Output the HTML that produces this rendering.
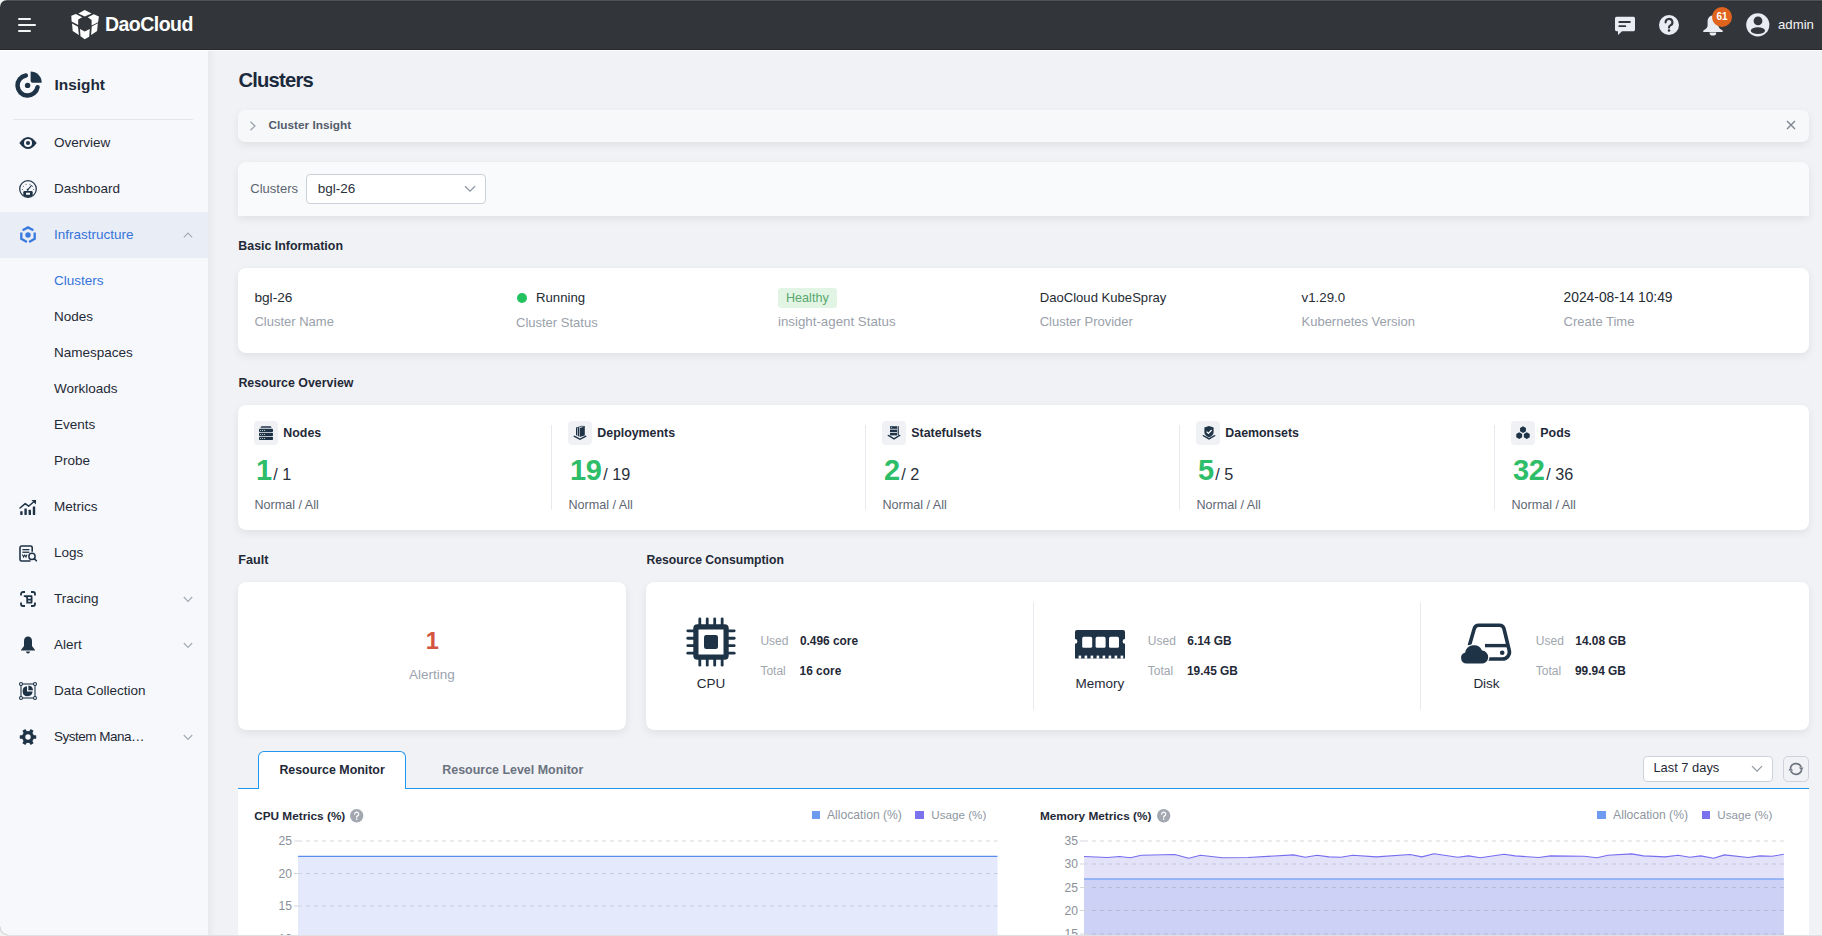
<!DOCTYPE html>
<html><head><meta charset="utf-8"><style>
*{box-sizing:border-box;margin:0;padding:0}
html,body{width:1822px;height:936px;overflow:hidden;background:#fff}
body{font-family:"Liberation Sans",sans-serif;position:relative}
.t{position:absolute;white-space:nowrap;line-height:1}
.r{position:absolute}
.s{position:absolute;overflow:visible}
</style></head><body>
<div class="r" style="left:0px;top:0px;width:1822px;height:50px;background:#323539"></div>
<div class="r" style="left:0px;top:0px;width:1822px;height:1px;background:#505357"></div>
<div class="r" style="left:0px;top:1px;width:1822px;height:1px;background:#2d3034"></div>
<div class="r" style="left:0px;top:49px;width:1822px;height:1px;background:#27292d"></div>
<div class="r" style="left:0px;top:50px;width:1822px;height:1px;background:#fcfcfd"></div>
<svg class="s" style="left:0px;top:0px;" width="8" height="8" viewBox="0 0 8 8"><path d="M0 0H7A7 7 0 0 0 0 7Z" fill="#f4f4f5"/></svg>
<div class="r" style="left:18px;top:18px;width:13px;height:2px;background:#f3f4f6;border-radius:1px"></div>
<div class="r" style="left:18px;top:24px;width:18px;height:2px;background:#f3f4f6;border-radius:1px"></div>
<div class="r" style="left:18px;top:30px;width:13px;height:2px;background:#f3f4f6;border-radius:1px"></div>
<svg class="s" style="left:68px;top:8px;" width="34" height="34" viewBox="0 0 34 34">
<path d="M10.35 5.45 L16.7 2 L23.6 5.45 L16.7 8.5Z" fill="#fff"/>
<path d="M3.3 7.8 L7.8 6 L14.2 9.3 L10.2 11.6 V17.1 L3.6 13.6Z" fill="#fff"/>
<path d="M19.8 9.3 L25.8 6.2 L30.9 8.5 L30.1 14.2 L23.6 17.4 V12Z" fill="#fff"/>
<path d="M4 15.6 L10 18.7 L10.9 27 L4.7 22.9Z" fill="#fff"/>
<path d="M12 21.1 L16.7 23.6 L21.8 20.9 L21.2 28.7 L16.7 31.2 L12.5 28.3Z" fill="#fff"/>
<path d="M23.8 18.5 L29.8 15.3 L29.1 23.1 L23.1 26.9Z" fill="#fff"/>
</svg>
<div class="t" style="left:105px;top:13.42px;font-size:21px;font-weight:bold;color:#ffffff;letter-spacing:-0.6px;transform:scaleX(0.93);transform-origin:0 0">DaoCloud</div>
<svg class="s" style="left:1614px;top:16px;" width="22" height="20" viewBox="0 0 22 20"><path d="M2.5 0.8 H19.5 A1.6 1.6 0 0 1 21 2.4 V13.6 A1.6 1.6 0 0 1 19.5 15.2 H8 L4 19 V15.2 H2.5 A1.6 1.6 0 0 1 1 13.6 V2.4 A1.6 1.6 0 0 1 2.5 0.8Z" fill="#e9edf3"/><rect x="4.4" y="5" width="12.4" height="1.9" rx="0.9" fill="#323539"/><rect x="4.4" y="9.2" width="7.8" height="1.9" rx="0.9" fill="#323539"/></svg>
<svg class="s" style="left:1658px;top:14px;" width="22" height="22" viewBox="0 0 22 22"><circle cx="11" cy="11" r="10" fill="#e9edf3"/><path d="M7.6 8.4 A3.4 3.4 0 1 1 12.4 11.4 C11.4 12 11 12.5 11 13.6" stroke="#323539" stroke-width="2.1" fill="none" stroke-linecap="round"/><circle cx="11" cy="16.6" r="1.25" fill="#323539"/></svg>
<svg class="s" style="left:1702px;top:14px;" width="22" height="22" viewBox="0 0 22 22"><path d="M11 1.4 C7.6 1.4 5.6 4 5.6 7.6 V11.4 C5.6 13.6 3.4 15.4 1.4 16.4 C1 16.8 1.2 18 1.8 18 H20.2 C20.8 18 21 16.8 20.6 16.4 C18.6 15.4 16.4 13.6 16.4 11.4 V7.6 C16.4 4 14.4 1.4 11 1.4Z" fill="#e9edf3"/><path d="M7.6 18.4 H14.2 V19.2 A3.3 2.4 0 0 1 7.6 19.2Z" fill="#e9edf3"/></svg>
<div class="r" style="left:1712px;top:7px;width:20px;height:20px;background:#e0641d;border-radius:50%"></div>
<div class="t" style="left:1522px;width:400px;text-align:center;top:11.84px;font-size:10px;font-weight:bold;color:#ffffff;">61</div>
<svg class="s" style="left:1746px;top:12.5px;" width="24" height="24" viewBox="0 0 24 24"><circle cx="11.8" cy="11.85" r="11.6" fill="#e9edf3"/><circle cx="12" cy="7.9" r="4.4" fill="#323539"/><circle cx="12" cy="7.9" r="3.1" fill="#323539"/><ellipse cx="11.9" cy="17.7" rx="7.1" ry="3.4" fill="#323539"/></svg>
<div class="t" style="left:1778px;top:17.83px;font-size:13.2px;color:#f3f4f6;">admin</div>
<div class="r" style="left:0px;top:51px;width:208px;height:885px;background:#f7f8fb"></div>
<svg class="s" style="left:12px;top:68px;" width="34" height="34" viewBox="0 0 34 34"><path d="M13.85 7.45 A10.1 10.1 0 1 0 25.55 19.15" fill="none" stroke="#1f3347" stroke-width="4.5" stroke-linecap="round"/><path d="M18.6 3.6 A11.1 11.1 0 0 1 29.7 14.7 H20.6 A2 2 0 0 1 18.6 12.7 Z" fill="#1f3347"/><circle cx="15.6" cy="17.4" r="2.7" fill="#1f3347"/></svg>
<div class="t" style="left:54.5px;top:76.86px;font-size:15.4px;font-weight:bold;color:#1d2b3a;">Insight</div>
<div class="r" style="left:13px;top:119px;width:180px;height:1px;background:#e3e6eb"></div>
<div class="r" style="left:0px;top:212px;width:208px;height:46px;background:#e9edf5"></div>
<div class="t" style="left:54px;top:136.27px;font-size:13.5px;color:#1f2a37;">Overview</div>
<div class="t" style="left:54px;top:182.37px;font-size:13.5px;color:#1f2a37;">Dashboard</div>
<div class="t" style="left:54px;top:228.37px;font-size:13.5px;color:#3574dc;">Infrastructure</div>
<div class="t" style="left:54px;top:500.37px;font-size:13.5px;color:#1f2a37;">Metrics</div>
<div class="t" style="left:54px;top:546.37px;font-size:13.5px;color:#1f2a37;">Logs</div>
<div class="t" style="left:54px;top:592.37px;font-size:13.5px;color:#1f2a37;">Tracing</div>
<div class="t" style="left:54px;top:638.37px;font-size:13.5px;color:#1f2a37;">Alert</div>
<div class="t" style="left:54px;top:684.37px;font-size:13.5px;color:#1f2a37;">Data Collection</div>
<div class="t" style="left:54px;top:730.37px;font-size:13.5px;color:#1f2a37;letter-spacing:-0.5px">System Mana…</div>
<div class="t" style="left:54px;top:274.37px;font-size:13.5px;color:#3574dc;">Clusters</div>
<div class="t" style="left:54px;top:310.37px;font-size:13.5px;color:#1f2a37;">Nodes</div>
<div class="t" style="left:54px;top:346.37px;font-size:13.5px;color:#1f2a37;">Namespaces</div>
<div class="t" style="left:54px;top:382.37px;font-size:13.5px;color:#1f2a37;">Workloads</div>
<div class="t" style="left:54px;top:418.37px;font-size:13.5px;color:#1f2a37;">Events</div>
<div class="t" style="left:54px;top:454.37px;font-size:13.5px;color:#1f2a37;">Probe</div>
<svg class="s" style="left:183px;top:232px;" width="10" height="6.4" viewBox="0 0 10 6.4"><path d="M0.8 5.4 L5 1 L9.2 5.4" fill="none" stroke="#a3abb6" stroke-width="1.2"/></svg>
<svg class="s" style="left:183px;top:596px;" width="10" height="6.4" viewBox="0 0 10 6.4"><path d="M0.8 1 L5 5.4 L9.2 1" fill="none" stroke="#a3abb6" stroke-width="1.2"/></svg>
<svg class="s" style="left:183px;top:642px;" width="10" height="6.4" viewBox="0 0 10 6.4"><path d="M0.8 1 L5 5.4 L9.2 1" fill="none" stroke="#a3abb6" stroke-width="1.2"/></svg>
<svg class="s" style="left:183px;top:734px;" width="10" height="6.4" viewBox="0 0 10 6.4"><path d="M0.8 1 L5 5.4 L9.2 1" fill="none" stroke="#a3abb6" stroke-width="1.2"/></svg>
<svg class="s" style="left:19px;top:134px;" width="18" height="18" viewBox="0 0 18 18"><path d="M0.3 9 Q9 -3.2 17.7 9 Q9 21.2 0.3 9Z" fill="#1f3347"/><circle cx="9" cy="9" r="4" fill="#f7f8fb"/><circle cx="9" cy="9" r="2.1" fill="#1f3347"/></svg>
<svg class="s" style="left:19px;top:180px;" width="18" height="18" viewBox="0 0 18 18"><circle cx="9" cy="9" r="8.3" fill="none" stroke="#1f3347" stroke-width="1.25"/><circle cx="3.30" cy="9.60" r="0.5" fill="#1f3347"/><circle cx="4.33" cy="6.33" r="0.5" fill="#1f3347"/><circle cx="7.05" cy="4.24" r="0.5" fill="#1f3347"/><circle cx="10.95" cy="4.24" r="0.5" fill="#1f3347"/><circle cx="13.67" cy="6.33" r="0.5" fill="#1f3347"/><circle cx="14.70" cy="9.60" r="0.5" fill="#1f3347"/><path d="M8.6 9.8 L12.4 5.6" stroke="#1f3347" stroke-width="1.1" stroke-linecap="round"/><circle cx="8.6" cy="9.7" r="1" fill="#1f3347"/><path d="M4.3 15.4 V12.2 Q4.3 11.1 5.4 11.1 H12.6 Q13.7 11.1 13.7 12.2 V15.4 A8.3 8.3 0 0 1 4.3 15.4Z" fill="#1f3347"/><rect x="7" y="12.7" width="4" height="2.1" fill="#f7f8fb"/></svg>
<svg class="s" style="left:20px;top:226px;" width="16" height="18" viewBox="0 0 16 18"><g fill="none" stroke="#3a7ade" stroke-width="2.3" stroke-linejoin="miter"><path d="M2.6 4.2 L8 1.4 L13.4 4.2"/><path d="M1.3 6.6 V12.8 L6.9 16"/><path d="M14.7 6.6 V12.8 L9.1 16"/></g><circle cx="8" cy="9" r="2.7" fill="#3a7ade"/></svg>
<svg class="s" style="left:19px;top:499px;" width="18" height="17" viewBox="0 0 18 17"><g fill="#1f3347"><rect x="1.2" y="12.2" width="2.4" height="3.8" rx="0.4"/><rect x="5.4" y="9.4" width="2.4" height="6.6" rx="0.4"/><rect x="9.6" y="10.8" width="2.4" height="5.2" rx="0.4"/><rect x="13.8" y="7.4" width="2.4" height="8.6" rx="0.4"/></g><path d="M1 9 L6.2 4.6 L9.6 7.2 L15.4 2.2" fill="none" stroke="#1f3347" stroke-width="1.5" stroke-linecap="round" stroke-linejoin="round"/><path d="M12.4 1 H17 V5.6 Z" fill="#1f3347"/></svg>
<svg class="s" style="left:19px;top:545px;" width="18" height="17" viewBox="0 0 18 17"><path d="M11.6 16 H2.6 A1.6 1.6 0 0 1 1 14.4 V2.6 A1.6 1.6 0 0 1 2.6 1 H11.6 A1.6 1.6 0 0 1 13.2 2.6 V6.8" fill="none" stroke="#1f3347" stroke-width="1.6"/><rect x="3.4" y="4" width="7" height="1.3" fill="#1f3347"/><rect x="3.4" y="6.6" width="7" height="1.3" fill="#1f3347"/><path d="M3.4 9.6 L4.6 12 L5.8 10 L7 12 L8 9.6" fill="none" stroke="#1f3347" stroke-width="1.1"/><circle cx="13" cy="11.4" r="3.1" fill="#f7f8fb" stroke="#1f3347" stroke-width="1.5"/><path d="M15.2 13.6 L17.4 15.8" stroke="#1f3347" stroke-width="1.6" stroke-linecap="round"/></svg>
<svg class="s" style="left:20px;top:591px;" width="16" height="16" viewBox="0 0 16 16"><g fill="none" stroke="#1f3347" stroke-width="1.8"><path d="M1 4.6 V3 A2 2 0 0 1 3 1 H5"/><path d="M11 1 H13 A2 2 0 0 1 15 3 V4.6"/><path d="M1 11.4 V13 A2 2 0 0 0 3 15 H5"/><path d="M11 15 H13 A2 2 0 0 0 15 13 V11.4"/><path d="M3.8 5.2 H12.2 M6 5.2 L7.2 6.8 V11.6 H12.2 M7.2 8.6 H12.2 M11.6 5.2 V11.6"/></g></svg>
<svg class="s" style="left:20px;top:636px;" width="16" height="18" viewBox="0 0 16 18"><path d="M8 0.6 C5.6 0.6 4 2.4 4 5 V10 L1 14 V14.6 H15 V14 L12 10 V5 C12 2.4 10.4 0.6 8 0.6Z" fill="#1f3347"/><path d="M6 15.6 H10 A2 2 0 0 1 6 15.6Z" fill="#1f3347"/></svg>
<svg class="s" style="left:19px;top:682px;" width="18" height="18" viewBox="0 0 18 18"><g fill="none" stroke="#1f3347" stroke-width="1.1"><rect x="2" y="2" width="14" height="14"/></g><circle cx="2" cy="2" r="1.5" fill="#f7f8fb" stroke="#1f3347" stroke-width="1.1"/><circle cx="16" cy="2" r="1.5" fill="#f7f8fb" stroke="#1f3347" stroke-width="1.1"/><circle cx="2" cy="16" r="1.5" fill="#f7f8fb" stroke="#1f3347" stroke-width="1.1"/><circle cx="16" cy="16" r="1.5" fill="#f7f8fb" stroke="#1f3347" stroke-width="1.1"/><path d="M8 4.2 A5 5 0 1 0 13.6 9.6 H8 Z" fill="#1f3347"/><path d="M9.4 3.6 A5 5 0 0 1 14 8.2 H9.4Z" fill="#1f3347"/></svg>
<svg class="s" style="left:20px;top:729.4px;" width="16" height="16" viewBox="0 0 16 16"><circle cx="8" cy="8" r="6" fill="#1f3347"/><rect x="6.2" y="-0.2" width="3.6" height="4" rx="0.6" fill="#1f3347" transform="rotate(30 8 8)"/><rect x="6.2" y="-0.2" width="3.6" height="4" rx="0.6" fill="#1f3347" transform="rotate(90 8 8)"/><rect x="6.2" y="-0.2" width="3.6" height="4" rx="0.6" fill="#1f3347" transform="rotate(150 8 8)"/><rect x="6.2" y="-0.2" width="3.6" height="4" rx="0.6" fill="#1f3347" transform="rotate(210 8 8)"/><rect x="6.2" y="-0.2" width="3.6" height="4" rx="0.6" fill="#1f3347" transform="rotate(270 8 8)"/><rect x="6.2" y="-0.2" width="3.6" height="4" rx="0.6" fill="#1f3347" transform="rotate(330 8 8)"/><circle cx="8" cy="8" r="2.7" fill="#f7f8fb"/></svg>
<div class="r" style="left:208px;top:51px;width:1614px;height:885px;background:#f1f2f5"></div>
<div class="r" style="left:208px;top:51px;width:8px;height:885px;background:linear-gradient(90deg,rgba(0,0,0,0.04),rgba(0,0,0,0))"></div>
<div class="t" style="left:238.5px;top:70.10px;font-size:20.2px;font-weight:bold;color:#1b2a3c;letter-spacing:-0.8px">Clusters</div>
<div class="r" style="left:238px;top:110px;width:1571px;height:32px;background:#f7f8fa;border-radius:7px;box-shadow:0 3px 8px rgba(0,0,0,0.075)"></div>
<svg class="s" style="left:249px;top:121px;" width="8" height="10" viewBox="0 0 8 10"><path d="M1.5 0.8 L6 5 L1.5 9.2" fill="none" stroke="#98a1ac" stroke-width="1.2"/></svg>
<div class="t" style="left:268.5px;top:119.81px;font-size:11.8px;font-weight:bold;color:#545c69;">Cluster Insight</div>
<svg class="s" style="left:1786px;top:120px;" width="10" height="10" viewBox="0 0 10 10"><path d="M1 1 L9 9 M9 1 L1 9" stroke="#7b8490" stroke-width="1.4"/></svg>
<div class="r" style="left:238px;top:162px;width:1571px;height:54px;background:#f9fafb;border-radius:8px 8px 0 0;box-shadow:0 3px 8px rgba(0,0,0,0.075)"></div>
<div class="t" style="left:250.3px;top:182.40px;font-size:13px;color:#5c6470;">Clusters</div>
<div class="r" style="left:306px;top:174px;width:180px;height:30px;background:#fff;border:1px solid #cbd0d8;border-radius:4px"></div>
<div class="t" style="left:317.7px;top:181.97px;font-size:13.5px;color:#2a313b;">bgl-26</div>
<svg class="s" style="left:464px;top:185px;" width="12" height="8" viewBox="0 0 12 8"><path d="M1 1.2 L6 6.2 L11 1.2" fill="none" stroke="#8e97a3" stroke-width="1.3"/></svg>
<div class="t" style="left:238.3px;top:239.80px;font-size:12.4px;font-weight:bold;color:#1f2937;">Basic Information</div>
<div class="r" style="left:238px;top:268px;width:1571px;height:85px;background:#fff;border-radius:8px;box-shadow:0 3px 8px rgba(0,0,0,0.075)"></div>
<div class="t" style="left:254.4px;top:290.80px;font-size:13.7px;color:#252b33;">bgl-26</div>
<div class="t" style="left:254.4px;top:315.40px;font-size:13px;color:#9aa1ab;">Cluster Name</div>
<div class="r" style="left:517px;top:293px;width:10px;height:10px;background:#22c25f;border-radius:50%"></div>
<div class="t" style="left:536px;top:291.23px;font-size:13.2px;color:#252b33;">Running</div>
<div class="t" style="left:516px;top:316.00px;font-size:13px;color:#9aa1ab;">Cluster Status</div>
<div class="r" style="left:778px;top:288px;width:59px;height:20px;background:#e2f5e5;border-radius:3px"></div>
<div class="t" style="left:786px;top:292.03px;font-size:12.6px;color:#58a86b;">Healthy</div>
<div class="t" style="left:778px;top:315.14px;font-size:13.3px;color:#9aa1ab;">insight-agent Status</div>
<div class="t" style="left:1039.7px;top:291.31px;font-size:13.1px;color:#252b33;">DaoCloud KubeSpray</div>
<div class="t" style="left:1039.7px;top:315.00px;font-size:13px;color:#9aa1ab;">Cluster Provider</div>
<div class="t" style="left:1301.5px;top:291.14px;font-size:13.3px;color:#252b33;">v1.29.0</div>
<div class="t" style="left:1301.5px;top:315.00px;font-size:13px;color:#9aa1ab;">Kubernetes Version</div>
<div class="t" style="left:1563.6px;top:290.72px;font-size:13.8px;color:#252b33;">2024-08-14 10:49</div>
<div class="t" style="left:1563.6px;top:315.00px;font-size:13px;color:#9aa1ab;">Create Time</div>
<div class="t" style="left:238.4px;top:376.70px;font-size:12.4px;font-weight:bold;color:#1f2937;">Resource Overview</div>
<div class="r" style="left:238px;top:405px;width:1571px;height:125px;background:#fff;border-radius:8px;box-shadow:0 3px 8px rgba(0,0,0,0.075)"></div>
<div class="r" style="left:254px;top:421px;width:24px;height:24px;background:#eff1f5;border-radius:4px"></div>
<div class="t" style="left:283.3px;top:427.10px;font-size:12.4px;font-weight:bold;color:#1f2937;">Nodes</div>
<div class="t" style="left:256px;top:455.65px;font-size:29px;font-weight:bold;color:#2ebd68;letter-spacing:-0.3px">1</div>
<div class="t" style="left:273.325px;top:466.49px;font-size:16.2px;color:#2a313b;">/ 1</div>
<div class="t" style="left:254.4px;top:499.13px;font-size:12.6px;color:#5f6773;">Normal / All</div>
<div class="r" style="left:551px;top:425px;width:1px;height:85px;background:#e6e9ee"></div>
<div class="r" style="left:568px;top:421px;width:24px;height:24px;background:#eff1f5;border-radius:4px"></div>
<div class="t" style="left:597.3px;top:427.10px;font-size:12.4px;font-weight:bold;color:#1f2937;">Deployments</div>
<div class="t" style="left:570px;top:455.65px;font-size:29px;font-weight:bold;color:#2ebd68;letter-spacing:-0.3px">19</div>
<div class="t" style="left:603.15px;top:466.49px;font-size:16.2px;color:#2a313b;">/ 19</div>
<div class="t" style="left:568.4px;top:499.13px;font-size:12.6px;color:#5f6773;">Normal / All</div>
<div class="r" style="left:865px;top:425px;width:1px;height:85px;background:#e6e9ee"></div>
<div class="r" style="left:882px;top:421px;width:24px;height:24px;background:#eff1f5;border-radius:4px"></div>
<div class="t" style="left:911.3px;top:427.10px;font-size:12.4px;font-weight:bold;color:#1f2937;">Statefulsets</div>
<div class="t" style="left:884px;top:455.65px;font-size:29px;font-weight:bold;color:#2ebd68;letter-spacing:-0.3px">2</div>
<div class="t" style="left:901.325px;top:466.49px;font-size:16.2px;color:#2a313b;">/ 2</div>
<div class="t" style="left:882.4px;top:499.13px;font-size:12.6px;color:#5f6773;">Normal / All</div>
<div class="r" style="left:1179px;top:425px;width:1px;height:85px;background:#e6e9ee"></div>
<div class="r" style="left:1196px;top:421px;width:24px;height:24px;background:#eff1f5;border-radius:4px"></div>
<div class="t" style="left:1225.3px;top:427.10px;font-size:12.4px;font-weight:bold;color:#1f2937;">Daemonsets</div>
<div class="t" style="left:1198px;top:455.65px;font-size:29px;font-weight:bold;color:#2ebd68;letter-spacing:-0.3px">5</div>
<div class="t" style="left:1215.325px;top:466.49px;font-size:16.2px;color:#2a313b;">/ 5</div>
<div class="t" style="left:1196.4px;top:499.13px;font-size:12.6px;color:#5f6773;">Normal / All</div>
<div class="r" style="left:1494px;top:425px;width:1px;height:85px;background:#e6e9ee"></div>
<div class="r" style="left:1511px;top:421px;width:24px;height:24px;background:#eff1f5;border-radius:4px"></div>
<div class="t" style="left:1540.3px;top:427.10px;font-size:12.4px;font-weight:bold;color:#1f2937;">Pods</div>
<div class="t" style="left:1513px;top:455.65px;font-size:29px;font-weight:bold;color:#2ebd68;letter-spacing:-0.3px">32</div>
<div class="t" style="left:1546.15px;top:466.49px;font-size:16.2px;color:#2a313b;">/ 36</div>
<div class="t" style="left:1511.4px;top:499.13px;font-size:12.6px;color:#5f6773;">Normal / All</div>
<svg class="s" style="left:258px;top:425px;" width="16" height="16" viewBox="0 0 16 16"><path d="M3.4 1.2 H12.6 L13.6 2.8 H2.4Z" fill="#1f3347"/><rect x="1" y="3.8" width="14" height="3.3" rx="0.8" fill="#1f3347"/><circle cx="2.6" cy="5.45" r="0.55" fill="#d8f5d8"/><circle cx="4.6" cy="5.45" r="0.55" fill="#d8f5d8"/><circle cx="6.6" cy="5.45" r="0.55" fill="#d8f5d8"/><rect x="1" y="7.8" width="14" height="3.3" rx="0.8" fill="#1f3347"/><circle cx="2.6" cy="9.45" r="0.55" fill="#d8f5d8"/><circle cx="4.6" cy="9.45" r="0.55" fill="#d8f5d8"/><circle cx="6.6" cy="9.45" r="0.55" fill="#d8f5d8"/><rect x="1" y="11.8" width="14" height="3.3" rx="0.8" fill="#1f3347"/><circle cx="2.6" cy="13.45" r="0.55" fill="#d8f5d8"/><circle cx="4.6" cy="13.45" r="0.55" fill="#d8f5d8"/><circle cx="6.6" cy="13.45" r="0.55" fill="#d8f5d8"/></svg>
<svg class="s" style="left:572px;top:425px;" width="16" height="16" viewBox="0 0 16 16"><path d="M1.2 11.4 L8 15 L14.8 11.4 L13.6 10.6 L8 13.4 L2.4 10.6Z" fill="#1f3347"/><path d="M7.6 3 L12.8 1.6 V10.6 L7.6 12 Z" fill="#1f3347"/><path d="M5.8 2.6 L7 2.2 V11.4 L5.8 11 Z M4 3 L5.2 2.6 V10.6 L4 10.2Z" fill="#1f3347"/><path d="M4 3 L9.6 1.2 L12.8 1.6" fill="none" stroke="#1f3347" stroke-width="0.8"/></svg>
<svg class="s" style="left:886px;top:425px;" width="16" height="16" viewBox="0 0 16 16"><path d="M1.2 10.6 L8 14.8 L14.8 10.6 L13.4 9.8 L8 13 L2.6 9.8Z" fill="#1f3347"/><rect x="4" y="1.2" width="7" height="2.6" fill="#1f3347"/><rect x="4" y="4.6" width="7" height="2.4" fill="#1f3347"/><rect x="4" y="7.8" width="7" height="2.6" fill="#1f3347"/><rect x="11.6" y="1.2" width="1.2" height="9" fill="#1f3347"/><circle cx="5.4" cy="2.5" r="0.6" fill="#9fd4ff"/></svg>
<svg class="s" style="left:1201px;top:425px;" width="16" height="16" viewBox="0 0 16 16"><path d="M1.2 10.8 L8 14.8 L14.8 10.8 L13.4 10 L8 13 L2.6 10Z" fill="#1f3347"/><path d="M8 1 L12.6 2.6 V7 C12.6 9.8 10.6 11.4 8 12.2 C5.4 11.4 3.4 9.8 3.4 7 V2.6Z" fill="#1f3347"/><path d="M5.6 6.6 L7.4 8.4 L10.6 5" fill="none" stroke="#fff" stroke-width="1.2"/></svg>
<svg class="s" style="left:1515px;top:425px;" width="16" height="16" viewBox="0 0 16 16"><path d="M10.94 6.30 L8.00 8.00 L5.06 6.30 L5.06 2.90 L8.00 1.20 L10.94 2.90Z" fill="#1f3347"/><path d="M7.14 12.30 L4.20 14.00 L1.26 12.30 L1.26 8.90 L4.20 7.20 L7.14 8.90Z" fill="#1f3347"/><path d="M14.74 12.30 L11.80 14.00 L8.86 12.30 L8.86 8.90 L11.80 7.20 L14.74 8.90Z" fill="#1f3347"/></svg>
<div class="t" style="left:238.3px;top:553.93px;font-size:12.6px;font-weight:bold;color:#1f2937;">Fault</div>
<div class="t" style="left:646.4px;top:553.87px;font-size:12.2px;font-weight:bold;color:#1f2937;">Resource Consumption</div>
<div class="r" style="left:238px;top:582px;width:388px;height:148px;background:#fff;border-radius:8px;box-shadow:0 3px 8px rgba(0,0,0,0.075)"></div>
<div class="t" style="left:232.3px;width:400px;text-align:center;top:629.62px;font-size:23.6px;font-weight:bold;color:#d4553f;">1</div>
<div class="t" style="left:232px;width:400px;text-align:center;top:667.57px;font-size:13.5px;color:#9ca3af;">Alerting</div>
<div class="r" style="left:646px;top:582px;width:1163px;height:148px;background:#fff;border-radius:8px;box-shadow:0 3px 8px rgba(0,0,0,0.075)"></div>
<div class="r" style="left:1033px;top:602px;width:1px;height:108px;background:#e6e9ee"></div>
<div class="r" style="left:1420px;top:602px;width:1px;height:108px;background:#e6e9ee"></div>
<svg class="s" style="left:686px;top:617px;" width="50" height="50" viewBox="0 0 50 50"><rect x="7.3" y="7.3" width="35.4" height="35.4" rx="4" fill="#1f3347"/><rect x="12.5" y="12.5" width="25" height="25" fill="#fff"/><rect x="18" y="18" width="14" height="14" rx="2.2" fill="#1f3347"/><rect x="12.40" y="0.4" width="2.8" height="9" rx="1.4" fill="#1f3347"/><rect x="12.40" y="40.6" width="2.8" height="9" rx="1.4" fill="#1f3347"/><rect x="0.4" y="12.40" width="9" height="2.8" rx="1.4" fill="#1f3347"/><rect x="40.6" y="12.40" width="9" height="2.8" rx="1.4" fill="#1f3347"/><rect x="19.85" y="0.4" width="2.8" height="9" rx="1.4" fill="#1f3347"/><rect x="19.85" y="40.6" width="2.8" height="9" rx="1.4" fill="#1f3347"/><rect x="0.4" y="19.85" width="9" height="2.8" rx="1.4" fill="#1f3347"/><rect x="40.6" y="19.85" width="9" height="2.8" rx="1.4" fill="#1f3347"/><rect x="27.30" y="0.4" width="2.8" height="9" rx="1.4" fill="#1f3347"/><rect x="27.30" y="40.6" width="2.8" height="9" rx="1.4" fill="#1f3347"/><rect x="0.4" y="27.30" width="9" height="2.8" rx="1.4" fill="#1f3347"/><rect x="40.6" y="27.30" width="9" height="2.8" rx="1.4" fill="#1f3347"/><rect x="34.75" y="0.4" width="2.8" height="9" rx="1.4" fill="#1f3347"/><rect x="34.75" y="40.6" width="2.8" height="9" rx="1.4" fill="#1f3347"/><rect x="0.4" y="34.75" width="9" height="2.8" rx="1.4" fill="#1f3347"/><rect x="40.6" y="34.75" width="9" height="2.8" rx="1.4" fill="#1f3347"/></svg>
<div class="t" style="left:511px;width:400px;text-align:center;top:677.17px;font-size:13.5px;color:#1f2a37;">CPU</div>
<div class="t" style="left:760.4px;top:634.64px;font-size:12px;color:#a0a6ae;">Used</div>
<div class="t" style="left:799.9px;top:635.73px;font-size:11.9px;font-weight:bold;color:#1f2937;">0.496 core</div>
<div class="t" style="left:760.4px;top:664.64px;font-size:12px;color:#a0a6ae;">Total</div>
<div class="t" style="left:799.6px;top:665.73px;font-size:11.9px;font-weight:bold;color:#1f2937;">16 core</div>
<svg class="s" style="left:1075px;top:629.5px;" width="50" height="29" viewBox="0 0 50 29"><path d="M2 0 H48 A2 2 0 0 1 50 2 V9 A2.4 2.4 0 0 0 50 13.8 V28.5 H0 V13.8 A2.4 2.4 0 0 0 0 9 V2 A2 2 0 0 1 2 0Z" fill="#1f3347"/><rect x="7.2" y="6.8" width="10" height="11" rx="1.6" fill="#fff"/><rect x="20.6" y="6.8" width="10" height="11" rx="1.6" fill="#fff"/><rect x="34.0" y="6.8" width="10" height="11" rx="1.6" fill="#fff"/><rect x="3.60" y="25.6" width="2.6" height="3" fill="#fff"/><rect x="9.60" y="25.6" width="2.6" height="3" fill="#fff"/><rect x="15.60" y="25.6" width="2.6" height="3" fill="#fff"/><rect x="21.60" y="25.6" width="2.6" height="3" fill="#fff"/><rect x="27.60" y="25.6" width="2.6" height="3" fill="#fff"/><rect x="33.60" y="25.6" width="2.6" height="3" fill="#fff"/><rect x="39.60" y="25.6" width="2.6" height="3" fill="#fff"/><rect x="45.60" y="25.6" width="2.6" height="3" fill="#fff"/></svg>
<div class="t" style="left:900px;width:400px;text-align:center;top:677.37px;font-size:13.5px;color:#1f2a37;">Memory</div>
<div class="t" style="left:1147.8px;top:634.64px;font-size:12px;color:#a0a6ae;">Used</div>
<div class="t" style="left:1187.3px;top:635.73px;font-size:11.9px;font-weight:bold;color:#1f2937;">6.14 GB</div>
<div class="t" style="left:1147.8px;top:664.64px;font-size:12px;color:#a0a6ae;">Total</div>
<div class="t" style="left:1187.0px;top:665.73px;font-size:11.9px;font-weight:bold;color:#1f2937;">19.45 GB</div>
<svg class="s" style="left:1461px;top:622.5px;" width="51" height="42" viewBox="0 0 51 42"><path d="M8.4 22.4 L13.2 5.8 A4.8 4.8 0 0 1 17.8 2.2 H38.4 A4.8 4.8 0 0 1 43 5.8 L48.2 27.2 A7 7 0 0 1 41.4 36 H24" fill="none" stroke="#1f3347" stroke-width="3.6" stroke-linejoin="round"/><path d="M24 22.6 H47" stroke="#1f3347" stroke-width="3.4"/><circle cx="41.2" cy="29.8" r="2.3" fill="#1f3347"/><path d="M5.8 40.6 A5.6 5.6 0 0 1 4.2 29.6 A8.8 8.8 0 0 1 21 27.6 A6.5 6.5 0 0 1 20.4 40.6 Z" fill="#1f3347" stroke="#fff" stroke-width="2.6" paint-order="stroke"/></svg>
<div class="t" style="left:1286.5px;width:400px;text-align:center;top:677.37px;font-size:13.5px;color:#1f2a37;">Disk</div>
<div class="t" style="left:1535.8px;top:634.64px;font-size:12px;color:#a0a6ae;">Used</div>
<div class="t" style="left:1575.3px;top:635.73px;font-size:11.9px;font-weight:bold;color:#1f2937;">14.08 GB</div>
<div class="t" style="left:1535.8px;top:664.64px;font-size:12px;color:#a0a6ae;">Total</div>
<div class="t" style="left:1575.0px;top:665.73px;font-size:11.9px;font-weight:bold;color:#1f2937;">99.94 GB</div>
<div class="r" style="left:238px;top:788px;width:1571px;height:1px;background:#2196ee"></div>
<div class="r" style="left:258px;top:751px;width:148px;height:38px;background:#fff;border:1px solid #2196ee;border-bottom:none;border-radius:6px 6px 0 0"></div>
<div class="t" style="left:279.4px;top:764.20px;font-size:12.4px;font-weight:bold;color:#1f2937;">Resource Monitor</div>
<div class="t" style="left:442.3px;top:764.16px;font-size:12.45px;font-weight:bold;color:#6b7280;">Resource Level Monitor</div>
<div class="r" style="left:1643px;top:756px;width:130px;height:26px;background:#fff;border:1px solid #cdd2da;border-radius:4px"></div>
<div class="t" style="left:1653.4px;top:762.38px;font-size:12.9px;color:#1f2937;">Last 7 days</div>
<svg class="s" style="left:1751px;top:765px;" width="12" height="8" viewBox="0 0 12 8"><path d="M1 1.2 L6 6.2 L11 1.2" fill="none" stroke="#8e97a3" stroke-width="1.2"/></svg>
<div class="r" style="left:1783px;top:756px;width:26px;height:26px;border:1px solid #cdd2da;border-radius:5px"></div>
<svg class="s" style="left:1788px;top:761px;" width="16" height="16" viewBox="0 0 16 16"><g fill="none" stroke="#6f7680" stroke-width="1.7"><path d="M2.4 7 A5.7 5.7 0 0 1 13.2 6.2"/><path d="M13.6 9 A5.7 5.7 0 0 1 2.8 9.8"/></g><path d="M10.8 6.4 L15.6 6.4 L13.6 9.6Z" fill="#6f7680"/><path d="M5.2 9.6 L0.4 9.6 L2.4 6.4Z" fill="#6f7680"/></svg>
<div class="r" style="left:238px;top:789px;width:1571px;height:147px;background:#fff"></div>
<div class="t" style="left:254.2px;top:810.71px;font-size:11.8px;font-weight:bold;color:#1f2937;">CPU Metrics (%)</div>
<svg class="s" style="left:350.4px;top:809.0px;" width="13.4" height="13.4" viewBox="0 0 14 14"><circle cx="7" cy="7" r="7" fill="#a3a8b0"/><path d="M4.9 5.4 A2.1 2.1 0 1 1 7.9 7.2 C7.3 7.6 7 7.9 7 8.6" stroke="#fff" stroke-width="1.3" fill="none" stroke-linecap="round"/><circle cx="7" cy="10.6" r="0.8" fill="#fff"/></svg>
<div class="t" style="left:1039.9px;top:810.71px;font-size:11.8px;font-weight:bold;color:#1f2937;">Memory Metrics (%)</div>
<svg class="s" style="left:1157.2px;top:809.0px;" width="13.4" height="13.4" viewBox="0 0 14 14"><circle cx="7" cy="7" r="7" fill="#a3a8b0"/><path d="M4.9 5.4 A2.1 2.1 0 1 1 7.9 7.2 C7.3 7.6 7 7.9 7 8.6" stroke="#fff" stroke-width="1.3" fill="none" stroke-linecap="round"/><circle cx="7" cy="10.6" r="0.8" fill="#fff"/></svg>
<div class="r" style="left:811.5px;top:811.3px;width:8.3px;height:7.6px;background:#6e9bf0"></div>
<div class="t" style="left:827px;top:808.62px;font-size:12.15px;color:#8f969f;">Allocation (%)</div>
<div class="r" style="left:915.3px;top:811.3px;width:8.3px;height:7.6px;background:#7b73ee"></div>
<div class="t" style="left:931.3px;top:809.04px;font-size:11.65px;color:#8f969f;">Usage (%)</div>
<div class="r" style="left:1597.4px;top:811.3px;width:8.3px;height:7.6px;background:#6e9bf0"></div>
<div class="t" style="left:1613.1px;top:808.62px;font-size:12.15px;color:#8f969f;">Allocation (%)</div>
<div class="r" style="left:1701.6px;top:811.3px;width:8.3px;height:7.6px;background:#7b73ee"></div>
<div class="t" style="left:1717.3px;top:809.04px;font-size:11.65px;color:#8f969f;">Usage (%)</div>
<div class="t" style="left:252px;top:835.16px;font-size:12.1px;color:#8a9099;width:40px;text-align:right">25</div>
<div class="t" style="left:252px;top:867.66px;font-size:12.1px;color:#8a9099;width:40px;text-align:right">20</div>
<div class="t" style="left:252px;top:900.16px;font-size:12.1px;color:#8a9099;width:40px;text-align:right">15</div>
<div class="t" style="left:252px;top:932.66px;font-size:12.1px;color:#8a9099;width:40px;text-align:right">10</div>
<svg class="s" style="left:0;top:0" width="1822" height="936" viewBox="0 0 1822 936"><path d="M298 856.4 H997.5 V936 H298Z" fill="#e4eafb"/><path d="M298 856.4 H997.5" stroke="#5b8def" stroke-width="1.4" fill="none"/><path d="M294 841.0 H302" stroke="#d3d7dd" stroke-width="1"/><path d="M306 841.0 H997.5" stroke="rgba(150,160,172,0.42)" stroke-width="1.2" stroke-dasharray="4 4"/><path d="M294 873.5 H302" stroke="#d3d7dd" stroke-width="1"/><path d="M306 873.5 H997.5" stroke="rgba(150,160,172,0.42)" stroke-width="1.2" stroke-dasharray="4 4"/><path d="M294 906.0 H302" stroke="#d3d7dd" stroke-width="1"/><path d="M306 906.0 H997.5" stroke="rgba(150,160,172,0.42)" stroke-width="1.2" stroke-dasharray="4 4"/><path d="M294 938.5 H302" stroke="#d3d7dd" stroke-width="1"/><path d="M306 938.5 H997.5" stroke="rgba(150,160,172,0.42)" stroke-width="1.2" stroke-dasharray="4 4"/></svg>
<div class="t" style="left:1038px;top:835.16px;font-size:12.1px;color:#8a9099;width:40px;text-align:right">35</div>
<div class="t" style="left:1038px;top:858.16px;font-size:12.1px;color:#8a9099;width:40px;text-align:right">30</div>
<div class="t" style="left:1038px;top:881.66px;font-size:12.1px;color:#8a9099;width:40px;text-align:right">25</div>
<div class="t" style="left:1038px;top:904.66px;font-size:12.1px;color:#8a9099;width:40px;text-align:right">20</div>
<div class="t" style="left:1038px;top:928.16px;font-size:12.1px;color:#8a9099;width:40px;text-align:right">15</div>
<svg class="s" style="left:0;top:0" width="1822" height="936" viewBox="0 0 1822 936"><path d="M1084.0 856.5 L1107.7 857.5 L1119.5 856.5 L1130.4 857.8 L1141.3 855.3 L1174.9 854.5 L1188.7 858.2 L1200.6 855.3 L1222.3 857.8 L1248.0 857.5 L1293.4 854.9 L1305.3 857.3 L1317.2 855.3 L1329.0 856.9 L1340.9 857.3 L1352.7 855.3 L1376.4 856.9 L1410.0 854.5 L1421.9 856.9 L1434.0 853.7 L1457.7 857.3 L1468.5 855.9 L1480.4 857.8 L1504.1 854.3 L1515.0 855.9 L1538.7 857.5 L1550.6 855.9 L1584.2 856.3 L1597.0 857.8 L1607.9 855.3 L1631.6 853.9 L1643.4 855.9 L1665.2 856.9 L1678.0 855.3 L1689.9 857.3 L1700.7 855.9 L1713.6 858.2 L1724.5 854.9 L1748.2 857.5 L1760.0 855.9 L1771.9 856.3 L1783.8 854.3 V936 H1084Z" fill="#e3e2f9"/><path d="M1084 879 H1783.8 V936 H1084Z" fill="#cdd1f5"/><path d="M1084.0 856.5 L1107.7 857.5 L1119.5 856.5 L1130.4 857.8 L1141.3 855.3 L1174.9 854.5 L1188.7 858.2 L1200.6 855.3 L1222.3 857.8 L1248.0 857.5 L1293.4 854.9 L1305.3 857.3 L1317.2 855.3 L1329.0 856.9 L1340.9 857.3 L1352.7 855.3 L1376.4 856.9 L1410.0 854.5 L1421.9 856.9 L1434.0 853.7 L1457.7 857.3 L1468.5 855.9 L1480.4 857.8 L1504.1 854.3 L1515.0 855.9 L1538.7 857.5 L1550.6 855.9 L1584.2 856.3 L1597.0 857.8 L1607.9 855.3 L1631.6 853.9 L1643.4 855.9 L1665.2 856.9 L1678.0 855.3 L1689.9 857.3 L1700.7 855.9 L1713.6 858.2 L1724.5 854.9 L1748.2 857.5 L1760.0 855.9 L1771.9 856.3 L1783.8 854.3" stroke="#776cf0" stroke-width="1.1" fill="none" stroke-linejoin="round"/><path d="M1084 879 H1783.8" stroke="#80a7f3" stroke-width="1.7" fill="none"/><path d="M1080 841.0 H1088" stroke="#d3d7dd" stroke-width="1"/><path d="M1092 841.0 H1783.8" stroke="rgba(150,160,172,0.42)" stroke-width="1.2" stroke-dasharray="4 4"/><path d="M1080 864.0 H1088" stroke="#d3d7dd" stroke-width="1"/><path d="M1092 864.0 H1783.8" stroke="rgba(150,160,172,0.42)" stroke-width="1.2" stroke-dasharray="4 4"/><path d="M1080 887.5 H1088" stroke="#d3d7dd" stroke-width="1"/><path d="M1092 887.5 H1783.8" stroke="rgba(150,160,172,0.42)" stroke-width="1.2" stroke-dasharray="4 4"/><path d="M1080 910.5 H1088" stroke="#d3d7dd" stroke-width="1"/><path d="M1092 910.5 H1783.8" stroke="rgba(150,160,172,0.42)" stroke-width="1.2" stroke-dasharray="4 4"/><path d="M1080 934.0 H1088" stroke="#d3d7dd" stroke-width="1"/><path d="M1092 934.0 H1783.8" stroke="rgba(150,160,172,0.42)" stroke-width="1.2" stroke-dasharray="4 4"/></svg>
<div class="r" style="left:0px;top:935px;width:1822px;height:1px;background:#e0e0e1"></div>
<svg class="s" style="left:0px;top:926px;" width="10" height="10" viewBox="0 0 10 10"><path d="M0 0 A9 9 0 0 0 9 9 V10 H0Z" fill="#f2f2f3"/><path d="M0 0.5 A8.6 8.6 0 0 0 8.6 9.2" fill="none" stroke="#d6d7d9" stroke-width="1.2"/></svg>
</body></html>
